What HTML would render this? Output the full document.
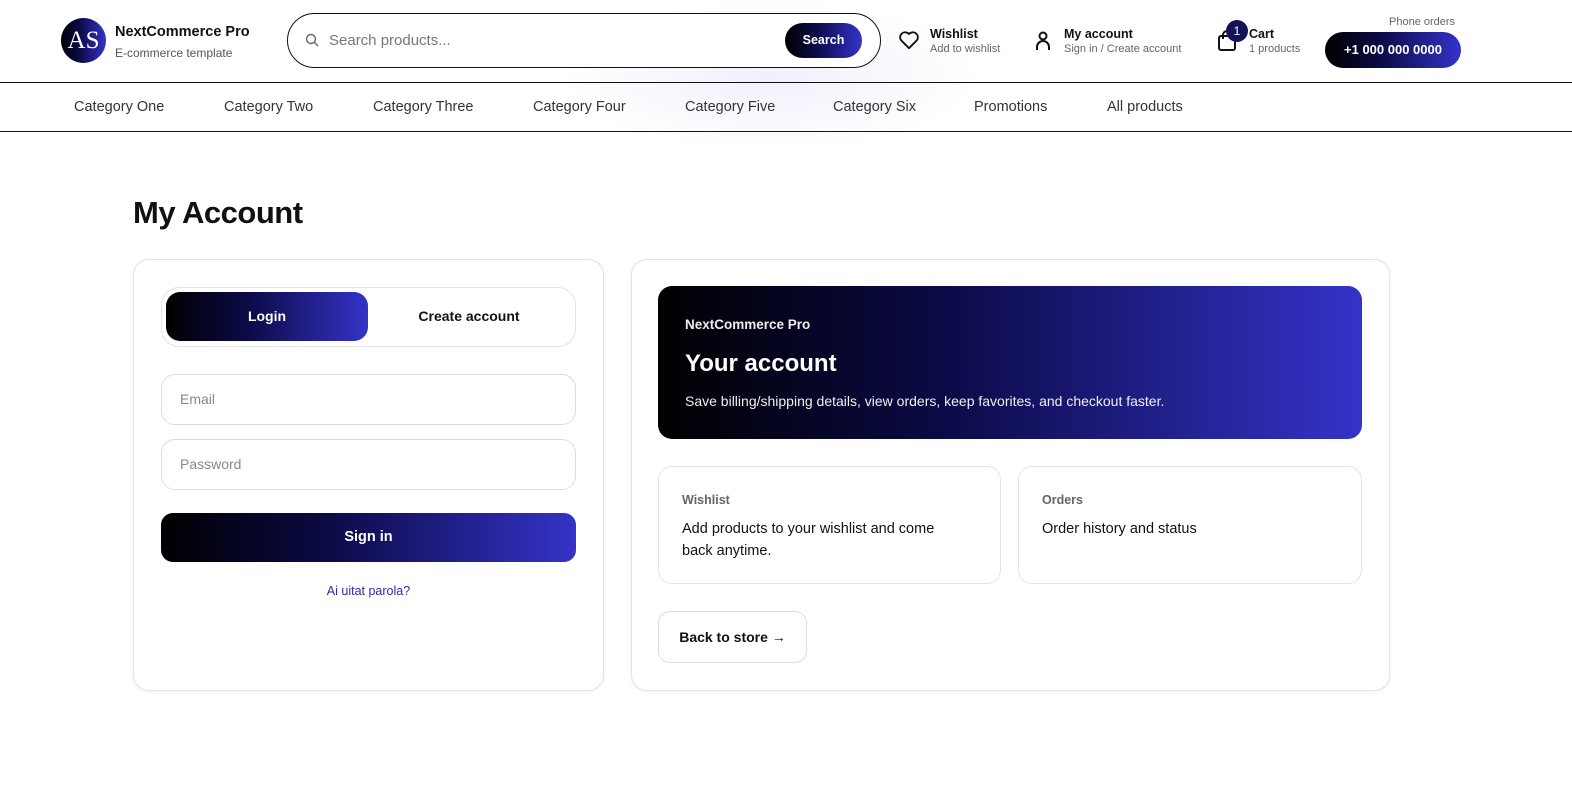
<!DOCTYPE html>
<html><head><meta charset="utf-8"><style>
*{box-sizing:border-box;margin:0;padding:0}
body{width:1572px;height:807px;background:#fff;font-family:"Liberation Sans",sans-serif;color:#111;position:relative;overflow:hidden}
.abs{position:absolute}
.grad{background:linear-gradient(90deg,#000 0%,#0b0a45 40%,#3533c9 100%)}
.nav span{position:absolute;top:99px;font-size:14.5px;color:#333}
.card{position:absolute;border:1px solid #e3e3e3;border-radius:16px;box-shadow:0 1px 4px rgba(0,0,0,.06);background:#fff}
.inp{position:absolute;border:1px solid #ddd;border-radius:14px;font-size:14px;color:#888;padding-left:18px;line-height:48px}
.sm{font-size:12px;color:#666}
</style></head><body>
<div class="abs" style="left:560px;top:0;width:420px;height:150px;background:radial-gradient(ellipse at center,rgba(225,225,250,.5),rgba(255,255,255,0) 70%)"></div>
<div class="abs grad" style="left:61px;top:18px;width:45px;height:45px;border-radius:50%;color:#fff;font-family:'Liberation Serif',serif;font-size:25px;text-align:center;line-height:45px">AS</div>
<div class="abs" style="left:115px;top:24px;font-size:14.5px;font-weight:bold;color:#111">NextCommerce Pro</div>
<div class="abs" style="left:115px;top:46px;font-size:12px;color:#555">E-commerce template</div>
<div class="abs" style="left:287px;top:13px;width:594px;height:55px;border:1px solid #111;border-radius:28px;background:#fff"></div>
<svg class="abs" style="left:305px;top:33px" width="14" height="14" viewBox="0 0 14 14"><circle cx="6" cy="6" r="4.5" fill="none" stroke="#666" stroke-width="1.4"/><path d="M9.5 9.5L13 13" stroke="#666" stroke-width="1.4"/></svg>
<div class="abs" style="left:329px;top:32px;font-size:15px;color:#777">Search products...</div>
<div class="abs grad" style="left:785px;top:23px;width:77px;height:35px;border-radius:18px;color:#fff;font-size:12.5px;font-weight:bold;text-align:center;line-height:35px">Search</div>
<svg class="abs" style="left:898px;top:30px" width="22" height="20" viewBox="0 0 24 22"><path d="M12 20 L3.5 11.5 A5 5 0 0 1 12 4.5 A5 5 0 0 1 20.5 11.5 Z" fill="none" stroke="#111" stroke-width="2" stroke-linejoin="round"/></svg>
<div class="abs" style="left:930px;top:27px;font-size:12.5px;font-weight:bold">Wishlist</div>
<div class="abs sm" style="left:930px;top:43px;font-size:11px">Add to wishlist</div>
<svg class="abs" style="left:1034px;top:30px" width="18" height="22" viewBox="0 0 18 22"><circle cx="9" cy="6" r="3.5" fill="none" stroke="#111" stroke-width="2"/><path d="M3 20 V17 A6 6 0 0 1 15 17 V20" fill="none" stroke="#111" stroke-width="2"/></svg>
<div class="abs" style="left:1064px;top:27px;font-size:12.5px;font-weight:bold">My account</div>
<div class="abs sm" style="left:1064px;top:43px;font-size:11px">Sign in / Create account</div>
<svg class="abs" style="left:1217px;top:30px" width="22" height="22" viewBox="0 0 22 22"><rect x="2" y="6" width="16" height="14" rx="2" fill="none" stroke="#111" stroke-width="2"/><path d="M6 9 V5 A4 4 0 0 1 14 5 V9" fill="none" stroke="#111" stroke-width="2"/></svg>
<div class="abs" style="left:1226px;top:20px;width:22px;height:22px;border-radius:50%;background:#14135a;color:#fff;font-size:12px;text-align:center;line-height:22px">1</div>
<div class="abs" style="left:1249px;top:27px;font-size:12.5px;font-weight:bold">Cart</div>
<div class="abs sm" style="left:1249px;top:43px;font-size:11px">1 products</div>
<div class="abs sm" style="left:1389px;top:16px;font-size:11px">Phone orders</div>
<div class="abs grad" style="left:1325px;top:32px;width:136px;height:36px;border-radius:18px;color:#fff;font-size:13px;font-weight:bold;text-align:center;line-height:36px">+1 000 000 0000</div>
<div class="abs" style="left:0;top:82px;width:1572px;height:1px;background:#111"></div>
<div class="abs" style="left:0;top:131px;width:1572px;height:1px;background:#111"></div>
<div class="nav">
<span style="left:74px">Category One</span><span style="left:224px">Category Two</span><span style="left:373px">Category Three</span><span style="left:533px">Category Four</span><span style="left:685px">Category Five</span><span style="left:833px">Category Six</span><span style="left:974px">Promotions</span><span style="left:1107px">All products</span>
</div>
<div class="abs" style="left:133px;top:195px;font-size:31px;font-weight:bold;letter-spacing:-0.5px;color:#111">My Account</div>
<div class="card" style="left:133px;top:259px;width:471px;height:432px"></div>
<div class="abs" style="left:161px;top:287px;width:415px;height:60px;border:1px solid #e3e3e3;border-radius:18px"></div>
<div class="abs grad" style="left:166px;top:292px;width:202px;height:49px;border-radius:14px;color:#fff;font-size:14px;font-weight:bold;text-align:center;line-height:49px">Login</div>
<div class="abs" style="left:368px;top:292px;width:202px;height:49px;font-size:14px;font-weight:bold;text-align:center;line-height:49px">Create account</div>
<div class="inp" style="left:161px;top:374px;width:415px;height:51px">Email</div>
<div class="inp" style="left:161px;top:439px;width:415px;height:51px">Password</div>
<div class="abs grad" style="left:161px;top:513px;width:415px;height:49px;border-radius:12px;color:#fff;font-size:14.5px;font-weight:bold;text-align:center;line-height:49px">Sign in</div>
<div class="abs" style="left:161px;top:584px;width:415px;text-align:center;font-size:12.5px;color:#2a2ab0">Ai uitat parola?</div>
<div class="card" style="left:631px;top:259px;width:759px;height:432px"></div>
<div class="abs grad" style="left:658px;top:286px;width:704px;height:153px;border-radius:14px;color:#fff">
<div class="abs" style="left:27px;top:31px;font-size:13.5px;font-weight:bold;color:#eee">NextCommerce Pro</div>
<div class="abs" style="left:27px;top:64px;font-size:24px;font-weight:bold">Your account</div>
<div class="abs" style="left:27px;top:107px;font-size:14px;color:#f0f0f0">Save billing/shipping details, view orders, keep favorites, and checkout faster.</div>
</div>
<div class="abs" style="left:658px;top:466px;width:343px;height:118px;border:1px solid #e3e3e3;border-radius:14px">
<div class="abs" style="left:23px;top:26px;font-size:12.5px;color:#666;font-weight:bold">Wishlist</div>
<div class="abs" style="left:23px;top:51px;width:285px;font-size:14.5px;line-height:22px">Add products to your wishlist and come back anytime.</div>
</div>
<div class="abs" style="left:1018px;top:466px;width:344px;height:118px;border:1px solid #e3e3e3;border-radius:14px">
<div class="abs" style="left:23px;top:26px;font-size:12.5px;color:#666;font-weight:bold">Orders</div>
<div class="abs" style="left:23px;top:51px;font-size:14.5px;line-height:22px">Order history and status</div>
</div>
<div class="abs" style="left:658px;top:611px;width:149px;height:52px;border:1px solid #ddd;border-radius:12px;font-size:14px;font-weight:bold;text-align:center;line-height:50px">Back to store →</div>
</body></html>
